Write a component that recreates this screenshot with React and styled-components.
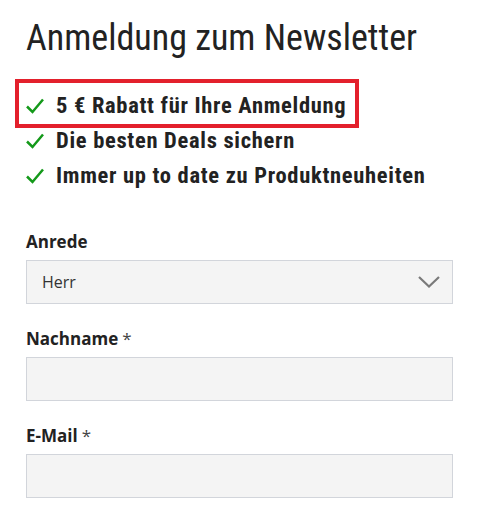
import React from "react";
import styled, { createGlobalStyle } from "styled-components";

const Global = createGlobalStyle`
  html, body { margin: 0; padding: 0; background: #fff; }
  body { font-family: "Open Sans", sans-serif; color: #222; }
`;

const Page = styled.div`
  width: 427px;
  padding: 17px 25px 0 26px;
  display: flex;
  flex-direction: column;
`;

const Title = styled.h1`
  margin: 0;
  font-family: Roboto, sans-serif;
  font-weight: 400;
  font-size: 36px;
  line-height: 42px;
  font-stretch: 75%;
  color: #222;
  letter-spacing: 0;
`;

const Benefits = styled.ul`
  list-style: none;
  margin: 29px 0 0 0;
  padding: 0;
`;

const Benefit = styled.li`
  position: relative;
  display: flex;
  align-items: center;
  gap: 12px;
  font-family: Roboto, sans-serif;
  font-weight: 700;
  font-size: 22.5px;
  line-height: 35px;
  font-stretch: 75%;
  letter-spacing: 0.7px;
  color: #222;
  ${(p) =>
    p.$highlight &&
    `
    &::after {
      content: "";
      position: absolute;
      left: -11px;
      top: -9px;
      width: 344px;
      height: 49px;
      box-sizing: border-box;
      border: 4px solid #e3202c;
      pointer-events: none;
    }
  `}
`;

const Check = styled.svg`
  width: 18px;
  height: 16px;
  flex: none;
`;

const Form = styled.form`
  margin-top: 37px;
  display: flex;
  flex-direction: column;
  gap: 23px;
`;

const Field = styled.div`
  display: flex;
  flex-direction: column;
  gap: 6px;
`;

const Label = styled.label`
  font-family: "Open Sans", sans-serif;
  font-weight: 700;
  font-size: 17px;
  line-height: 24px;
  color: #222;
`;

const Req = styled.span`
  font-weight: 400;
  color: #444;
  margin-left: 4px;
`;

const Box = styled.div`
  position: relative;
  box-sizing: border-box;
  height: 44px;
  border: 1px solid #d2d5db;
  background: #f4f4f4;
  display: flex;
  align-items: center;
  padding: 0 15px;
  font-family: "Open Sans", sans-serif;
  font-size: 16px;
  color: #333;
`;

const Chevron = styled.svg`
  margin-left: auto;
  margin-right: -3px;
  width: 22px;
  height: 12px;
`;

const CheckIcon = () => (
  <Check viewBox="0 0 18 16">
    <path d="M1 8.5 L6.5 14 L17 1.5" fill="none" stroke="#14991a" strokeWidth="2.5" />
  </Check>
);

const items = [
  "5 € Rabatt für Ihre Anmeldung",
  "Die besten Deals sichern",
  "Immer up to date zu Produktneuheiten",
];

export default function App() {
  return (
    <>
      <Global />
      <Page>
        <Title>Anmeldung zum Newsletter</Title>
        <Benefits>
          {items.map((t, i) => (
            <Benefit key={t} $highlight={i === 0}>
              <CheckIcon />
              <span>{t}</span>
            </Benefit>
          ))}
        </Benefits>
        <Form>
          <Field>
            <Label>Anrede</Label>
            <Box>
              Herr
              <Chevron viewBox="0 0 22 12">
                <path d="M1 1 L11 10.5 L21 1" fill="none" stroke="#7a7a7a" strokeWidth="2.2" />
              </Chevron>
            </Box>
          </Field>
          <Field>
            <Label>
              Nachname<Req>*</Req>
            </Label>
            <Box />
          </Field>
          <Field>
            <Label>
              E-Mail<Req>*</Req>
            </Label>
            <Box />
          </Field>
        </Form>
      </Page>
    </>
  );
}
